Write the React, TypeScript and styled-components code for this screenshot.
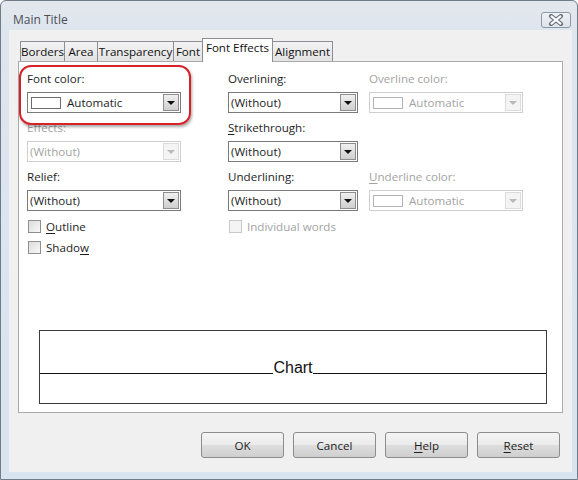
import React from 'react';
import styled, { createGlobalStyle, css } from 'styled-components';

const GlobalStyle = createGlobalStyle`
  html, body {
    margin: 0;
    padding: 0;
    background: #ffffff;
  }
  body {
    font-family: "Open Sans", "Noto Sans", "Liberation Sans", sans-serif;
    font-size: 11.6px;
    color: #1e1e1e;
  }
`;

const Window = styled.div`
  width: 578px;
  height: 480px;
  box-sizing: border-box;
  border: 1px solid #707c89;
  border-radius: 6px 6px 0 0;
  background: linear-gradient(to bottom, #e4e8ed 0px, #dde5ee 30px, #d9e4f1 100%);
  display: flex;
  flex-direction: column;
  overflow: hidden;
`;

const TitleBar = styled.div`
  height: 28px;
  flex: none;
  display: flex;
  align-items: center;
  justify-content: space-between;
  padding: 0 6px 0 12px;
`;

const TitleText = styled.div`
  font-size: 12px;
  color: #4a4f57;
  padding-top: 8px;
`;

const CloseButton = styled.div`
  width: 30px;
  height: 16px;
  margin-top: 10px;
  box-sizing: border-box;
  border: 1px solid #8d98a6;
  border-radius: 3px;
  background: linear-gradient(to bottom, #eef1f5, #dfe4ea);
  display: flex;
  align-items: center;
  justify-content: center;
`;

const Body = styled.div`
  flex: 1;
  margin: 1px 5px 7px 8px;
  background: #f0f0f0;
  padding: 8px 9px 13px 9px;
  display: flex;
  flex-direction: column;
`;

const TabRow = styled.div`
  display: flex;
  align-items: flex-end;
  height: 23px;
  padding-left: 2px;
  position: relative;
  z-index: 1;
`;

const Tab = styled.div<{ $w: number; $active?: boolean }>`
  width: ${(p) => p.$w}px;
  box-sizing: border-box;
  height: 20px;
  border: 1px solid #8c8e94;
  border-bottom: none;
  margin-right: -1px;
  background: linear-gradient(to bottom, #f3f3f3, #e3e3e3);
  display: flex;
  align-items: center;
  justify-content: center;
  white-space: nowrap;
  color: #111;
  ${(p) =>
    p.$active &&
    css`
      height: 24px;
      margin-bottom: -1px;
      background: #ffffff;
      align-items: flex-start;
      padding-top: 1px;
      position: relative;
      z-index: 2;
    `}
`;

const Panel = styled.div`
  height: 352px;
  box-sizing: border-box;
  border: 1px solid #a9aaae;
  background: #ffffff;
  position: relative;
  display: flex;
  flex-direction: column;
  padding: 9px 19px 8px 8px;
`;

const Grid = styled.div`
  display: grid;
  grid-template-columns: 201px 141px 154px;
  row-gap: 7px;
`;

const Field = styled.div`
  display: flex;
  flex-direction: column;
`;

const Label = styled.div<{ $disabled?: boolean }>`
  height: 16px;
  line-height: 16px;
  margin-bottom: 5px;
  white-space: nowrap;
  color: ${(p) => (p.$disabled ? '#a3a3a3' : '#1e1e1e')};
`;

const Mn = styled.span`
  text-decoration: underline;
  text-underline-offset: 2px;
`;

const Select = styled.div<{ $w: number; $disabled?: boolean }>`
  width: ${(p) => p.$w}px;
  height: 21px;
  box-sizing: border-box;
  border: 1px solid ${(p) => (p.$disabled ? '#cfcfcf' : '#7a7a7a')};
  background: #ffffff;
  display: flex;
  align-items: center;
  color: ${(p) => (p.$disabled ? '#a3a3a3' : '#1e1e1e')};
`;

const SelectText = styled.div`
  flex: 1;
  padding-left: 2px;
  white-space: nowrap;
  display: flex;
  align-items: center;
  gap: 6px;
`;

const Swatch = styled.span<{ $disabled?: boolean }>`
  width: 30px;
  height: 12px;
  box-sizing: border-box;
  border: 1px solid ${(p) => (p.$disabled ? '#b4b4b4' : '#6e6e6e')};
  background: #ffffff;
  margin-left: 1px;
`;

const Arrow = styled.div<{ $disabled?: boolean }>`
  width: 16px;
  height: 17px;
  margin-right: 1px;
  box-sizing: border-box;
  border: 1px solid ${(p) => (p.$disabled ? '#dcdcdc' : '#8e8e8e')};
  background: ${(p) =>
    p.$disabled ? '#f4f4f4' : 'linear-gradient(to bottom, #f0f0f0, #cfcfcf)'};
  display: flex;
  align-items: center;
  justify-content: center;
  &::after {
    content: '';
    border-left: 4px solid transparent;
    border-right: 4px solid transparent;
    border-top: 4px solid ${(p) => (p.$disabled ? '#b9b9b9' : '#111')};
  }
`;

const CheckRow = styled.div<{ $disabled?: boolean }>`
  display: flex;
  align-items: center;
  gap: 5px;
  height: 21px;
  color: ${(p) => (p.$disabled ? '#a3a3a3' : '#1e1e1e')};
`;

const CheckBox = styled.span<{ $disabled?: boolean }>`
  width: 13px;
  height: 13px;
  box-sizing: border-box;
  margin-left: 1px;
  border: 1px solid ${(p) => (p.$disabled ? '#c9c9c9' : '#8f8f8f')};
  background: ${(p) =>
    p.$disabled ? '#f4f4f4' : 'linear-gradient(135deg, #dcdcdc, #f8f8f8)'};
`;

const Checks = styled.div`
  display: grid;
  grid-template-columns: 201px auto;
  margin-top: 5px;
`;

const Preview = styled.div`
  margin: auto 0 0 12px;
  width: 508px;
  height: 74px;
  box-sizing: border-box;
  border: 1px solid #3c3c3c;
  display: flex;
  flex-direction: column;
`;

const PreviewTop = styled.div`
  height: 43px;
  display: flex;
  align-items: flex-end;
`;

const PreviewLine = styled.div`
  flex: 1;
  height: 1px;
  background: #111;
`;

const PreviewText = styled.div`
  font-family: "Liberation Sans", Arial, sans-serif;
  font-size: 16px;
  line-height: 16px;
  color: #111;
  margin-bottom: -2px;
`;

const Highlight = styled.div`
  position: absolute;
  left: 0px;
  top: 3px;
  width: 172px;
  height: 60px;
  box-sizing: border-box;
  border: 2px solid #d6232a;
  border-radius: 12px;
  box-shadow: 1px 2px 3px rgba(0, 0, 0, 0.35);
  pointer-events: none;
`;

const ButtonRow = styled.div`
  display: flex;
  justify-content: flex-end;
  gap: 9px;
  margin-top: 19px;
  padding-right: 3px;
`;

const Button = styled.div`
  width: 83px;
  height: 26px;
  box-sizing: border-box;
  border: 1px solid #8c8c8c;
  border-radius: 3px;
  background: linear-gradient(to bottom, #f4f4f4 0%, #ebebeb 48%, #dddddd 52%, #cfcfcf 100%);
  display: flex;
  align-items: center;
  justify-content: center;
  color: #1e1e1e;
`;

const CloseGlyph: React.FC = () => (
  <svg width="16" height="12" viewBox="0 0 16 12">
    <path d="M3 2 L13 10 M13 2 L3 10" stroke="#6a7380" strokeWidth="4.2" strokeLinecap="round" />
    <path d="M3.5 2.4 L12.5 9.6 M12.5 2.4 L3.5 9.6" stroke="#ffffff" strokeWidth="2" strokeLinecap="round" />
  </svg>
);

const ListBox: React.FC<{ w: number; disabled?: boolean; color?: boolean; value: string }> = ({
  w,
  disabled,
  color,
  value,
}) => (
  <Select $w={w} $disabled={disabled}>
    <SelectText>
      {color && <Swatch $disabled={disabled} />}
      {value}
    </SelectText>
    <Arrow $disabled={disabled} />
  </Select>
);

const tabs = [
  { label: 'Borders', w: 45 },
  { label: 'Area', w: 34 },
  { label: 'Transparency', w: 77 },
  { label: 'Font', w: 30 },
  { label: 'Font Effects', w: 71, active: true },
  { label: 'Alignment', w: 61 },
];

const App: React.FC = () => {
  return (
    <>
      <GlobalStyle />
      <Window>
        <TitleBar>
          <TitleText>Main Title</TitleText>
          <CloseButton>
            <CloseGlyph />
          </CloseButton>
        </TitleBar>
        <Body>
          <TabRow>
            {tabs.map((t) => (
              <Tab key={t.label} $w={t.w} $active={t.active}>
                {t.label}
              </Tab>
            ))}
          </TabRow>
          <Panel>
            <Grid>
              <Field>
                <Label>Font color:</Label>
                <ListBox w={154} color value="Automatic" />
              </Field>
              <Field>
                <Label>Overlining:</Label>
                <ListBox w={130} value="(Without)" />
              </Field>
              <Field>
                <Label $disabled>Overline color:</Label>
                <ListBox w={154} color disabled value="Automatic" />
              </Field>

              <Field>
                <Label $disabled>Effects:</Label>
                <ListBox w={154} disabled value="(Without)" />
              </Field>
              <Field>
                <Label>
                  <Mn>S</Mn>trikethrough:
                </Label>
                <ListBox w={130} value="(Without)" />
              </Field>
              <Field />

              <Field>
                <Label>Relief:</Label>
                <ListBox w={154} value="(Without)" />
              </Field>
              <Field>
                <Label>Underlining:</Label>
                <ListBox w={130} value="(Without)" />
              </Field>
              <Field>
                <Label $disabled>
                  <Mn>U</Mn>nderline color:
                </Label>
                <ListBox w={154} color disabled value="Automatic" />
              </Field>
            </Grid>

            <Checks>
              <CheckRow>
                <CheckBox />
                <span>
                  <Mn>O</Mn>utline
                </span>
              </CheckRow>
              <CheckRow $disabled>
                <CheckBox $disabled />
                <span>Individual words</span>
              </CheckRow>
              <CheckRow>
                <CheckBox />
                <span>
                  Shado<Mn>w</Mn>
                </span>
              </CheckRow>
            </Checks>

            <Preview>
              <PreviewTop>
                <PreviewLine />
                <PreviewText>Chart</PreviewText>
                <PreviewLine />
              </PreviewTop>
            </Preview>

            <Highlight />
          </Panel>
          <ButtonRow>
            <Button>OK</Button>
            <Button>Cancel</Button>
            <Button>
              <span>
                <Mn>H</Mn>elp
              </span>
            </Button>
            <Button>
              <span>
                <Mn>R</Mn>eset
              </span>
            </Button>
          </ButtonRow>
        </Body>
      </Window>
    </>
  );
};

export default App;
